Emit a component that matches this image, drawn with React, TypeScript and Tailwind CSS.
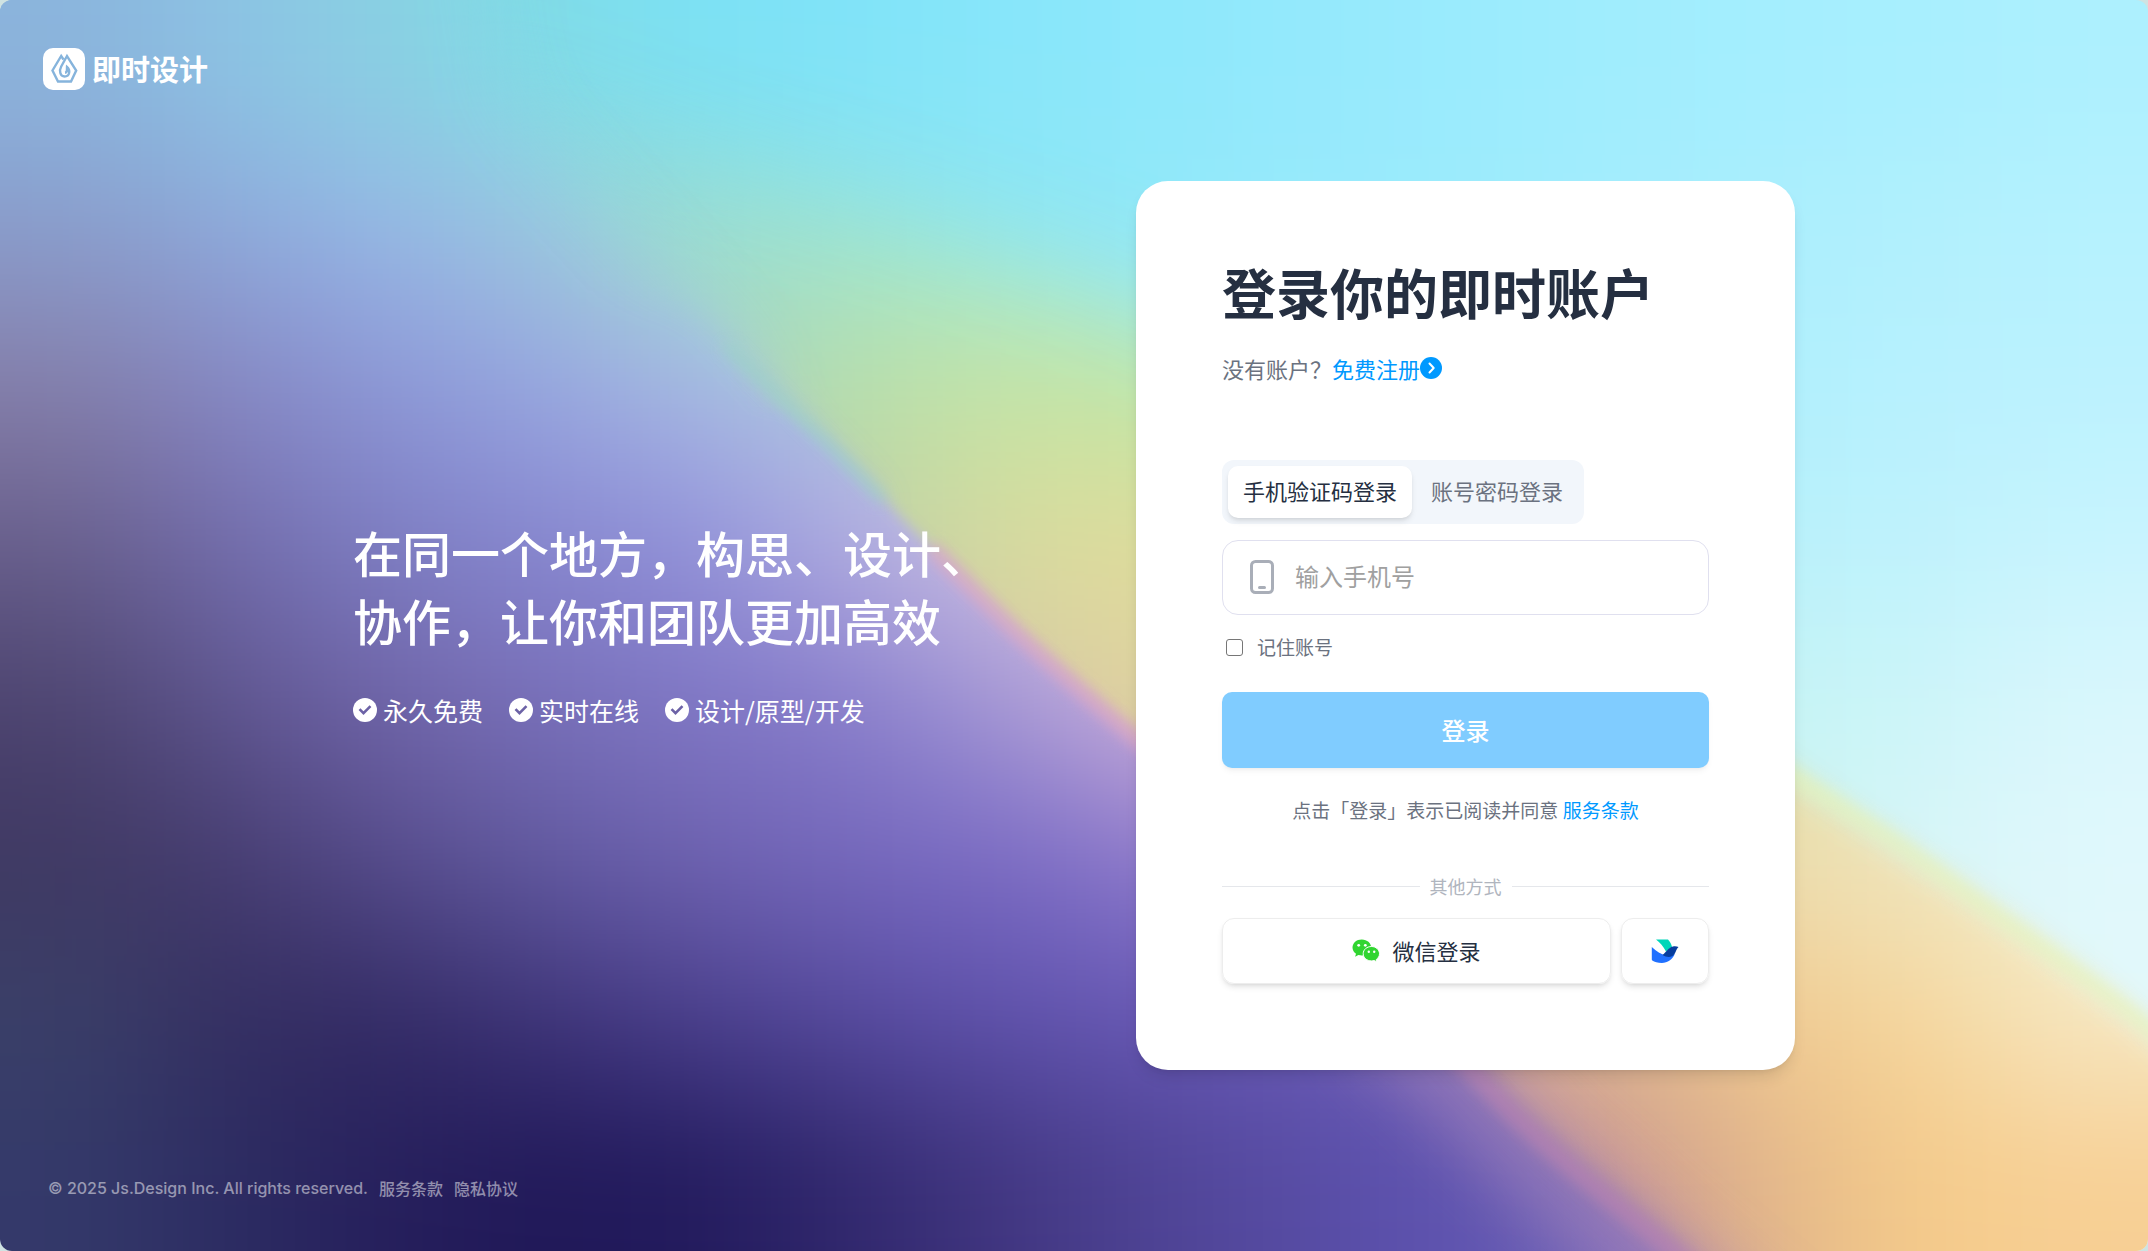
import { useState } from "react";

const CELL_W = 112;
const CELL_H = 114;

const violet = [
  "8bb4dc 8cc3e4 8ad0e2 80dce6 7ce1f4 80e3f8 87e6fa 8de8fb 94e9fc 9aebfd a0edfd a4eefe a8effe adf0fe",
  "8a9bcb 8ea8da 97b6e6 9cc4de 9edad2 9ce4dc 8ce6f6 90e8fb 98eafc 9cebfc a4edfd aceefd b2f0fd b6f2fe",
  "857ea9 8686c2 8c96d6 96a4e0 a8b8e4 acc4e0 c0c8e0 c0c8e0 c0c8e0 c0c8e0 c0c8e0 c0c8e0 c0c8e0 c0c8e0",
  "685f8c 726bab 7d7dc2 8685ce 908fd9 b0ace2 ccbee0 d0bce0 d0bce0 d0bce0 d0bce0 d0bce0 d0bce0 d0bce0",
  "4d4470 5f5690 7064a8 786fb8 7f76c4 877ccb a398d6 ccb0da d4a8d0 d4a8d0 d4a8d0 d4a8d0 d4a8d0 d4a8d0",
  "3f3862 463c70 564c8c 625aa0 6e62b0 7568bc 7a6ac4 8a78cc a88cd0 c0a0d0 c0a0d0 c0a0d0 c0a0d0 c0a0d0",
  "3a4068 342e60 332b64 3e3478 4a3f8c 564a9e 5f52ac 6657b4 6a5ab8 7464ba 9880bc b890c0 b890c0 b890c0",
  "34396a 2c2c62 261f5c 201858 221a5c 30276c 40357f 4e4394 574ca4 5e53b0 7266b8 b080b8 b880b8 b880b8",
];

const sky = [
  "8bb4dc 8cc3e4 8ad0e2 80dce6 7ce1f4 80e3f8 87e6fa 8de8fb 94e9fc 9aebfd a0edfd a4eefe a8effe adf0fe",
  "8a9bcb 8ea8da 97b6e6 96cce0 94dcd8 92e2e6 8ee6f2 92e8f8 98eafc 9cebfc a4edfd aceefd b2f0fd b6f2fe",
  "a0d0d8 a0d0d8 a0d0d8 a0d0d8 a4d4cc a0e2d0 9ce8e4 9ceaf2 a0ecf8 a6edfa aceefc b0f0fd b8f1fe bcf2fe",
  "a8d8c8 a8d8c8 a8d8c8 a8d8c8 a8d8c8 a8d8c8 b0e4d0 b0ecd8 b0eeec b0f0f8 b4f0fa b8f1fb c0f2fc c8f4fe",
  "b8e8d8 b8e8d8 b8e8d8 b8e8d8 b8e8d8 b8e8d8 b8e8d8 b8e8d8 c0f0e8 c0f0e8 c4f2ee c6f4f4 ccf5f9 daf7fc",
  "d0f4f0 d0f4f0 d0f4f0 d0f4f0 d0f4f0 d0f4f0 d0f4f0 d0f4f0 d0f4f0 d0f4f0 d0f4f0 ccf5f0 d8f5f8 e0f8fc",
  "e0f8f8 e0f8f8 e0f8f8 e0f8f8 e0f8f8 e0f8f8 e0f8f8 e0f8f8 e0f8f8 e0f8f8 e0f8f8 e0f8f8 dcf6f0 e2f8fa",
  "e6f8f8 e6f8f8 e6f8f8 e6f8f8 e6f8f8 e6f8f8 e6f8f8 e6f8f8 e6f8f8 e6f8f8 e6f8f8 e6f8f8 e6f8f8 e6f8f8",
];

const amber = [
  "8ad0e2 8ad0e2 8ad0e2 82dce4 82e0e8 88e4ec 8ee6ec 94e6e4 9ce4cc 9ce4cc 9ce4cc 9ce4cc 9ce4cc 9ce4cc",
  "9cc4de 9cc4de 9cc4de 9accd8 9cdcd0 a0e4cc a2e8d4 a4e8dc a4e8dc a8e8c8 a8e8c8 a8e8c8 a8e8c8 a8e8c8",
  "a4d4bc a4d4bc a4d4bc a4d4bc a8d0c4 b8dea8 c6e4a4 c2e6a4 b8eaac b8eaac b8eaac b8eaac b8eaac b8eaac",
  "b4d4b0 b4d4b0 b4d4b0 b4d4b0 b4d4b0 bccea8 d8da9e e2dc9a dcdc9c dcdc9c dcdc9c dcdca0 dcdca0 dcdca0",
  "d0c4b0 d0c4b0 d0c4b0 d0c4b0 d0c4b0 cec4a8 d4c8a8 dfd2a0 dcd4a0 dcd4a0 dcd4a0 e0e4a8 e4e4b4 e0e8b0",
  "d8b8a8 d8b8a8 d8b8a8 d8b8a8 d8b8a8 d8b8a8 d8b8a8 dcbca4 dcc4a0 e0c8a0 e4d0a0 ecdeb0 f0e6c0 f0f0cc",
  "d0a0a0 d0a0a0 d0a0a0 d0a0a0 d0a0a0 d0a0a0 d0a0a0 d0a0a0 d0a49c d4a898 dcb690 f2cb90 f5d69c f6e8c4",
  "c89098 c89098 c89098 c89098 c89098 c89098 c89098 c89098 c89098 c89498 cc9890 e2b68a f5cb8a f7cf94",
];

const clamp = (n: number, max: number) => Math.min(Math.max(n, 0), max);

type MeshProps = { rows: string[] };

// colour grid, two extra cells on every side so the blur never fades out
const Mesh = ({ rows }: MeshProps) => (
  <g filter="url(#meshBlur)">
    {Array.from({ length: 12 }, (_, r) => {
      const colors = rows[clamp(r - 2, 7)].split(" ");
      return Array.from({ length: 18 }, (_, c) => (
        <rect
          key={`${r}-${c}`}
          x={(c - 2) * CELL_W}
          y={(r - 2) * CELL_H}
          width={CELL_W + 1}
          height={CELL_H + 1}
          fill={`#${colors[clamp(c - 2, 13)]}`}
        />
      ));
    })}
  </g>
);

type BlurProps = { id: string; amount: number };

const Blur = ({ id, amount }: BlurProps) => (
  <filter
    id={id}
    filterUnits="userSpaceOnUse"
    x="-224"
    y="-228"
    width="2016"
    height="1368"
    colorInterpolationFilters="sRGB"
  >
    <feGaussianBlur stdDeviation={amount} />
  </filter>
);

const Backdrop = () => (
  <svg
    className="absolute inset-0 -z-10 h-full w-full"
    viewBox="0 0 1568 913"
    preserveAspectRatio="none"
    aria-hidden="true"
  >
    <defs>
      <Blur id="meshBlur" amount={54} />
      <Blur id="wide" amount={38} />
      <Blur id="soft" amount={26} />
      <Blur id="mid" amount={12} />
      <Blur id="thin" amount={5} />
      <mask id="amberMask" maskUnits="userSpaceOnUse" x="-200" y="-200" width="2000" height="1400">
        <path
          d="M340 50 C450 95 560 125 657 155 C720 175 780 195 829 213 L1060 330 V1100 H340 Z"
          fill="white"
          filter="url(#wide)"
        />
        <path
          d="M950 330 C1080 420 1190 490 1310 568 C1400 630 1490 682 1566 750 L1700 870 V1100 H950 Z"
          fill="white"
          filter="url(#mid)"
        />
      </mask>
      <mask id="violetMask" maskUnits="userSpaceOnUse" x="-200" y="-200" width="2000" height="1400">
        <path
          d="M-400 -400 H300 L370 70 C430 140 480 190 540 258 L570 360 L500 700 H-400 Z"
          fill="white"
          filter="url(#soft)"
        />
        <path
          d="M380 220 L500 228 L550 274 L602 322 L640 362 V600 H380 Z"
          fill="white"
          filter="url(#mid)"
        />
        <path
          d="M420 330 L570 300 L602 322 L657 377 L740 458 C770 486 800 512 829 537 L960 650 V1100 H-400 V500 Z"
          fill="white"
          filter="url(#thin)"
        />
        <path
          d="M900 600 C980 680 1040 740 1088 794 C1126 836 1176 874 1220 910 L1400 1100 H-400 L700 700 Z"
          fill="white"
          filter="url(#mid)"
        />
      </mask>
    </defs>
    <Mesh rows={sky} />
    <g mask="url(#amberMask)">
      <Mesh rows={amber} />
    </g>
    <path
      d="M1250 526 L1318 572 L1388 617 L1458 668 C1500 698 1535 722 1566 748 L1640 810"
      fill="none"
      stroke="#e6f4b4"
      strokeWidth="12"
      opacity="0.55"
      filter="url(#thin)"
    />
    <g mask="url(#violetMask)">
      <Mesh rows={violet} />
    </g>
    <path
      d="M530 252 L602 322 L645 365"
      fill="none"
      stroke="#98d4c4"
      strokeWidth="8"
      opacity="0.6"
      filter="url(#thin)"
    />
    <path
      d="M680 400 L740 460 C770 488 800 514 829 539 L900 600"
      fill="none"
      stroke="#dca4c8"
      strokeWidth="12"
      opacity="0.7"
      filter="url(#thin)"
    />
    <path
      d="M1000 730 L1070 795 C1110 840 1160 880 1205 920 L1300 1000"
      fill="none"
      stroke="#a584ba"
      strokeWidth="50"
      opacity="0.7"
      filter="url(#soft)"
    />
    <path
      d="M1000 705 L1088 796 C1126 838 1176 876 1220 912 L1300 980"
      fill="none"
      stroke="#b880b4"
      strokeWidth="12"
      opacity="0.6"
      filter="url(#thin)"
    />
  </svg>
);

const LogoMark = () => (
  <svg className="h-[42px] w-[42px]" viewBox="0 0 42 42" fill="none" aria-hidden="true">
    <rect width="42" height="42" rx="10" fill="white" />
    <path
      d="M20.5 11.5 18.2 8 9.5 22.5 15 33.5h13L33.2 22.5 24 8 18.2 18.5C16 22.5 17 28.5 21.5 28.5c5.5 0 6-6.5 2.5-9.5-.2 2.5.8 5.5-2 5.8"
      stroke="#86b4dc"
      strokeWidth="2.4"
    />
  </svg>
);

const CheckBadge = () => (
  <svg className="h-6 w-6" viewBox="0 0 24 24" aria-hidden="true">
    <circle cx="12" cy="12" r="12" fill="white" />
    <path d="m6.5 11.2 4 4 7-7" fill="none" stroke="#6c62a6" strokeWidth="2.6" />
  </svg>
);

const ArrowBadge = () => (
  <svg className="h-[22px] w-[22px]" viewBox="0 0 22 22" aria-hidden="true">
    <circle cx="11" cy="11" r="11" fill="#0099ff" />
    <path
      d="m9.5 6.5 4.2 4.5-4.2 4.5"
      fill="none"
      stroke="white"
      strokeWidth="2"
      strokeLinecap="round"
      strokeLinejoin="round"
    />
  </svg>
);

const PhoneIcon = () => (
  <svg className="h-[34px] w-6 shrink-0" viewBox="0 0 24 34" fill="none" aria-hidden="true">
    <rect x="1.5" y="1.5" width="21" height="31" rx="4" stroke="#a9aeb8" strokeWidth="3" />
    <path d="M9.5 27.5h5" stroke="#a9aeb8" strokeWidth="3" strokeLinecap="round" />
  </svg>
);

const WechatIcon = () => (
  <svg className="h-[23px] w-7" viewBox="0 0 28 23" aria-hidden="true">
    <path
      d="M9.8.5C4.4.5.5 4 .5 8.6c0 2.5 1.3 4.7 3.5 6.2l-.9 3 3.3-1.7c1.2.3 2.3.5 3.4.5 5.3 0 9.4-3.5 9.4-8S15.1.5 9.8.5Z"
      fill="#31d531"
    />
    <path
      d="M19.5 7.5c-4.6 0-8.3 3.1-8.3 7.2s3.7 7.2 8.3 7.2c.9 0 1.9-.2 2.8-.4l2.7 1.4-.7-2.4c2-1.4 3.2-3.5 3.2-5.8 0-4-3.6-7.2-8-7.2Z"
      fill="#31d531"
      stroke="white"
      strokeWidth="1"
    />
    <g fill="white">
      <circle cx="6.7" cy="6.3" r="1.4" />
      <circle cx="13.3" cy="6.3" r="1.4" />
      <circle cx="16.8" cy="12.8" r="1.2" />
      <circle cx="22.2" cy="12.8" r="1.2" />
    </g>
  </svg>
);

const FeishuIcon = () => (
  <svg className="h-6 w-7" viewBox="0 0 28 24" aria-hidden="true">
    <path d="M5 .5h12c2 2 3.5 5 4 7.5-2.5 1.2-4 3-6 4.5C12.5 7.5 9 3.5 5 .5Z" fill="#00d6b9" />
    <path d="M.8 8c4.5 4 9.500 7.500 14 8.500 4 .6 6.500 0 9-1.500-2.500 5.500-7 9-13 9-4 0-7.500-1.200-9.500-2.500-.4-.3-.5-.8-.5-1.300Z" fill="#2070ff" />
    <path d="M27.5 8c-2 2-2.500 4.500-4 7-2.500 4-8 3.500-12 1C15 13.500 17 8.500 22 7.500c2-.4 4-.1 5.500.5Z" fill="#063d9e" />
  </svg>
);

const features = ["永久免费", "实时在线", "设计/原型/开发"];

const tabs = ["手机验证码登录", "账号密码登录"];

const LoginCard = () => {
  const [tab, setTab] = useState(0);

  return (
    <form
      className="w-[659px] shrink-0 rounded-[32px] bg-white px-[86px] pt-[83px] pb-[86px] shadow-lg"
      onSubmit={(e) => e.preventDefault()}
    >
      <h1 className="text-[54px] leading-14 font-bold text-[#252f41]">登录你的即时账户</h1>
      <p className="mt-8 flex items-center text-[22px] leading-8 text-[#6b7280]">
        没有账户？
        <a href="#register" className="flex items-center text-[#0099ff]">
          免费注册
          <ArrowBadge />
        </a>
      </p>

      <div className="mt-[76px] flex w-fit gap-1 rounded-xl bg-[#f2f6fb] p-1.5">
        {tabs.map((name, i) => (
          <button
            key={name}
            type="button"
            onClick={() => setTab(i)}
            className={
              i === tab
                ? "h-[52px] rounded-[10px] bg-white px-[15px] pb-1 text-[22px] text-[#252f41] shadow-md"
                : "h-[52px] rounded-[10px] px-[15px] pb-1 text-[22px] text-[#6b7280]"
            }
          >
            {name}
          </button>
        ))}
      </div>

      <label className="mt-4 flex h-[75px] items-center gap-[21px] rounded-2xl border border-[#e0e0ef] px-[27px] pb-0.5">
        <PhoneIcon />
        <input
          type="tel"
          aria-label="手机号"
          placeholder="输入手机号"
          className="w-full min-w-0 pb-0.5 text-2xl text-[#252f41] outline-none placeholder:text-[#a0a0a0]"
        />
      </label>

      <label className="mt-[18px] flex items-center gap-[14px] pl-1 text-[19px] leading-7 text-[#6b7280]">
        <input
          type="checkbox"
          className="h-[17px] w-[17px] appearance-none rounded-[3px] border border-[#767676] checked:bg-[#0099ff]"
        />
        记住账号
      </label>

      <button
        type="submit"
        className="mt-[31px] h-[76px] w-full rounded-[10px] bg-[#80ccff] text-2xl font-medium text-white shadow-md shadow-black/5"
      >
        登录
      </button>

      <p className="mt-7 text-center text-[19px] leading-7 text-[#6b7280]">
        点击「登录」表示已阅读并同意{" "}
        <a href="#terms" className="text-[#0099ff]">
          服务条款
        </a>
      </p>

      <div className="mt-12 flex items-center gap-2.5 text-lg leading-7 text-[#b0b5be]">
        <span className="h-px flex-1 bg-[#e5e7eb]" />
        其他方式
        <span className="h-px flex-1 bg-[#e5e7eb]" />
      </div>

      <div className="mt-[18px] flex gap-2.5">
        <button
          type="button"
          className="flex h-[66px] flex-1 items-center justify-center gap-3 rounded-xl border border-[#ededed] pb-0.5 text-[22px] text-[#252f41] shadow-md shadow-black/10"
        >
          <WechatIcon />
          微信登录
        </button>
        <button
          type="button"
          aria-label="飞书登录"
          className="flex h-[66px] w-[88px] items-center justify-center rounded-xl border border-[#ededed] shadow-md shadow-black/10"
        >
          <FeishuIcon />
        </button>
      </div>
    </form>
  );
};

const App = () => {
  return (
    <div className="bg-[#cfe3e2] font-['Noto_Sans_CJK_SC',sans-serif]">
      <div className="relative isolate flex min-h-screen flex-col overflow-hidden rounded-xl">
        <Backdrop />
        <header className="flex h-[138px] items-center px-[43px]">
          <a href="#home" className="flex items-center gap-[7px] text-[29px] text-white">
            <LogoMark />
            <span className="pb-0.5 leading-10 font-bold">即时设计</span>
          </a>
        </header>

        <main className="mx-auto flex w-full max-w-[1442px] flex-1 items-center justify-between">
          <section className="pb-1.5 text-white">
            <h2 className="text-[49px] leading-[68px] font-medium">
              在同一个地方，构思、设计、
              <br />
              协作，让你和团队更加高效
            </h2>
            <ul className="mt-[38px] flex gap-[26px] text-[25px] leading-9">
              {features.map((item) => (
                <li key={item} className="flex items-center gap-1.5">
                  <CheckBadge />
                  {item}
                </li>
              ))}
            </ul>
          </section>
          <LoginCard />
        </main>

        <footer className="flex h-[138px] items-center gap-[11px] px-12 pt-3 text-base leading-6 text-white/50">
          <span className="font-['Inter',sans-serif] font-medium">
            © 2025 Js.Design Inc. All rights reserved.
          </span>
          <a href="#terms" className="font-medium">
            服务条款
          </a>
          <a href="#privacy" className="font-medium">
            隐私协议
          </a>
        </footer>
      </div>
    </div>
  );
};

export default App;
